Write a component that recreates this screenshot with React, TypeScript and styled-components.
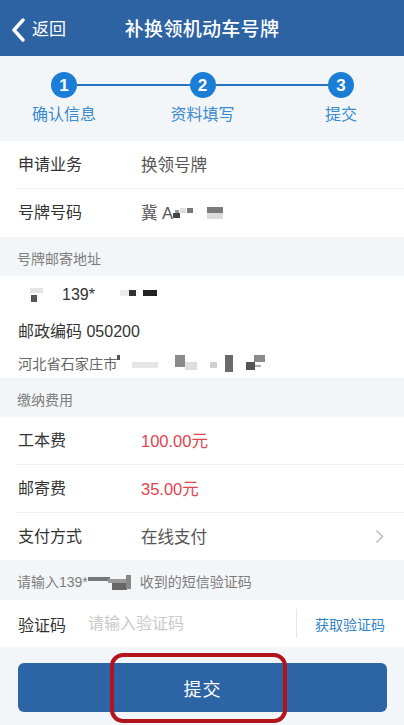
import React from "react";
import styled, { createGlobalStyle } from "styled-components";

const FONT = `"Liberation Sans", "Noto Sans CJK SC", sans-serif`;

const Global = createGlobalStyle`
  html, body { margin: 0; padding: 0; background: #f3f6f8; }
  body { font-family: ${FONT}; -webkit-font-smoothing: antialiased; }
  * { box-sizing: border-box; }
`;

const Page = styled.div`
  width: 404px;
  min-height: 725px;
  background: #f3f6f8;
  display: flex;
  flex-direction: column;
  overflow: hidden;
`;

const Header = styled.header`
  height: 56px;
  padding-top: 4px;
  background: #2d63a3;
  display: grid;
  grid-template-columns: 1fr auto 1fr;
  align-items: center;
  color: #fff;
`;

const Back = styled.div`
  display: flex;
  align-items: center;
  gap: 7px;
  padding-left: 11px;
  font-size: 17px;
  line-height: 24px;
`;

const Title = styled.h1`
  margin: 0;
  font-size: 19px;
  line-height: 26px;
  font-weight: 500;
  letter-spacing: 0.3px;
`;

const Steps = styled.div`
  padding: 16px 50px 16px 51px;
  display: flex;
  align-items: flex-start;
`;

const Step = styled.div`
  width: 26px;
  display: flex;
  flex-direction: column;
  align-items: center;
`;

const Circle = styled.div`
  width: 26px;
  height: 26px;
  border-radius: 50%;
  background: #1b7ed6;
  color: #fff;
  font-size: 17px;
  font-weight: 700;
  display: flex;
  align-items: center;
  justify-content: center;
  line-height: 1;
`;

const StepLabel = styled.div`
  margin-top: 7px;
  white-space: nowrap;
  font-size: 16px;
  line-height: 20px;
  color: #3a8ad0;
`;

const Connector = styled.div`
  flex: 1;
  height: 2px;
  margin-top: 12px;
  background: #2a72c2;
`;

const Group = styled.div`
  background: #fff;
`;

const Row = styled.div<{ $h?: number; $last?: boolean }>`
  height: ${(p) => p.$h ?? 48}px;
  margin-left: 16px;
  padding: 0 20px 0 2px;
  display: grid;
  grid-template-columns: 123px 1fr auto;
  align-items: center;
  border-bottom: ${(p) => (p.$last ? "none" : "1px solid #eef0f1")};
`;

const Label = styled.span`
  font-size: 16px;
  line-height: 22px;
  color: #333;
`;

const Value = styled.span<{ $red?: boolean }>`
  display: flex;
  align-items: center;
  font-size: 16.5px;
  line-height: 22px;
  color: ${(p) => (p.$red ? "#e2434e" : "#555")};
`;

const SectionTitle = styled.div<{ $h?: number }>`
  height: ${(p) => p.$h ?? 39}px;
  padding: 2px 17px 0;
  display: flex;
  align-items: center;
  font-size: 14px;
  color: #7d7d7d;
`;

const AddressBlock = styled.div`
  background: #fff;
  padding: 2px 18px 0;
  height: 102px;
  display: flex;
  flex-direction: column;
`;

const AddrLine = styled.div<{ $h: number; $muted?: boolean; $size?: number }>`
  height: ${(p) => p.$h}px;
  display: flex;
  align-items: center;
  font-size: ${(p) => p.$size ?? 16}px;
  color: ${(p) => (p.$muted ? "#666" : "#333")};
`;

const CodeRow = styled.div`
  background: #fff;
  height: 47px;
  padding: 0 19px 0 18px;
  display: flex;
  align-items: center;
`;

const CodeLabel = styled.span`
  width: 70px;
  font-size: 16px;
  color: #333;
`;

const CodeInput = styled.input`
  flex: 1;
  min-width: 0;
  border: none;
  outline: none;
  background: transparent;
  font-family: ${FONT};
  font-size: 16px;
  padding: 0;
  color: #333;
  &::placeholder { color: #c9c9c9; }
`;

const Divider = styled.div`
  width: 1px;
  height: 29px;
  background: #e6e6e6;
  margin-right: 18px;
`;

const GetCode = styled.span`
  font-size: 14px;
  color: #3384c8;
`;

const Footer = styled.div`
  flex: 1;
  padding: 16px 17px 13px 18px;
`;

const ButtonWrap = styled.div`
  position: relative;
`;

const Submit = styled.button`
  width: 100%;
  height: 49px;
  border: none;
  border-radius: 6px;
  background: #2c64a6;
  color: #fff;
  font-family: ${FONT};
  font-size: 18px;
  letter-spacing: 1px;
`;

const Highlight = styled.div`
  position: absolute;
  left: 92px;
  top: -10px;
  width: 177px;
  height: 70px;
  border: 4px solid #b3141c;
  border-radius: 13px;
  pointer-events: none;
`;

type Block = [number, number, number, number, string];

const Mosaic = ({ w, h, blocks }: { w: number; h: number; blocks: Block[] }) => (
  <svg width={w} height={h} style={{ display: "block", flexShrink: 0 }}>
    {blocks.map(([x, y, bw, bh, c], i) => (
      <rect key={i} x={x} y={y} width={bw} height={bh} fill={c} />
    ))}
  </svg>
);

const ChevronLeft = () => (
  <svg width="14" height="24" viewBox="0 0 14 24">
    <polyline points="12,2 3,12 12,22" fill="none" stroke="#fff" strokeWidth="3.4" strokeLinecap="round" strokeLinejoin="round" />
  </svg>
);

const ChevronRight = () => (
  <svg width="9" height="15" viewBox="0 0 9 15">
    <polyline points="1.5,1.5 7.5,7.5 1.5,13.5" fill="none" stroke="#bdbdbd" strokeWidth="1.5" />
  </svg>
);

export default function App() {
  return (
    <Page>
      <Global />
      <Header>
        <Back>
          <ChevronLeft />
          <span>返回</span>
        </Back>
        <Title>补换领机动车号牌</Title>
        <div />
      </Header>

      <Steps>
        <Step>
          <Circle>1</Circle>
          <StepLabel>确认信息</StepLabel>
        </Step>
        <Connector />
        <Step>
          <Circle>2</Circle>
          <StepLabel>资料填写</StepLabel>
        </Step>
        <Connector />
        <Step>
          <Circle>3</Circle>
          <StepLabel>提交</StepLabel>
        </Step>
      </Steps>

      <Group>
        <Row>
          <Label>申请业务</Label>
          <Value>换领号牌</Value>
        </Row>
        <Row $last>
          <Label>号牌号码</Label>
          <Value>
            冀 A
            <Mosaic
              w={52}
              h={20}
              blocks={[
                [0, 10, 7, 5, "#444"],
                [2, 7, 4, 3, "#999"],
                [7, 5, 6, 5, "#ddd"],
                [14, 5, 6, 5, "#777"],
                [34, 4, 16, 6, "#7a7a7a"],
                [34, 10, 16, 6, "#dcdcdc"],
              ]}
            />
          </Value>
        </Row>
      </Group>

      <SectionTitle>号牌邮寄地址</SectionTitle>

      <AddressBlock>
        <AddrLine $h={34}>
          <Mosaic
            w={44}
            h={22}
            blocks={[
              [12, 4, 13, 5, "#e4e4e4"],
              [13, 11, 6, 7, "#555"],
            ]}
          />
          <span>139*</span>
          <Mosaic
            w={70}
            h={22}
            blocks={[
              [25, 6, 9, 6, "#ececec"],
              [34, 6, 7, 6, "#333"],
              [48, 6, 14, 6, "#222"],
            ]}
          />
        </AddrLine>
        <AddrLine $h={35}>邮政编码 050200</AddrLine>
        <AddrLine $h={31} $muted $size={14.2}>
          河北省石家庄市
          <Mosaic
            w={160}
            h={22}
            blocks={[
              [0, 3, 3, 5, "#555"],
              [15, 10, 26, 6, "#e6e6e6"],
              [58, 3, 10, 12, "#8a8a8a"],
              [68, 10, 12, 8, "#dedede"],
              [93, 10, 7, 6, "#d0d0d0"],
              [108, 3, 8, 17, "#6a6a6a"],
              [129, 10, 9, 8, "#555"],
              [137, 3, 11, 7, "#8a8a8a"],
              [138, 13, 6, 2, "#aaa"],
            ]}
          />
        </AddrLine>
      </AddressBlock>

      <SectionTitle>缴纳费用</SectionTitle>

      <Group>
        <Row>
          <Label>工本费</Label>
          <Value $red>100.00元</Value>
        </Row>
        <Row>
          <Label>邮寄费</Label>
          <Value $red>35.00元</Value>
        </Row>
        <Row $h={47} $last>
          <Label>支付方式</Label>
          <Value>在线支付</Value>
          <ChevronRight />
        </Row>
      </Group>

      <SectionTitle $h={40}>
        请输入139*
        <Mosaic
          w={52}
          h={20}
          blocks={[
            [0, 6, 22, 4, "#777"],
            [20, 8, 20, 4, "#999"],
            [24, 12, 15, 7, "#666"],
            [38, 4, 5, 14, "#888"],
          ]}
        />
        收到的短信验证码
      </SectionTitle>

      <CodeRow>
        <CodeLabel>验证码</CodeLabel>
        <CodeInput placeholder="请输入验证码" />
        <Divider />
        <GetCode>获取验证码</GetCode>
      </CodeRow>

      <Footer>
        <ButtonWrap>
          <Submit>提交</Submit>
          <Highlight />
        </ButtonWrap>
      </Footer>
    </Page>
  );
}
